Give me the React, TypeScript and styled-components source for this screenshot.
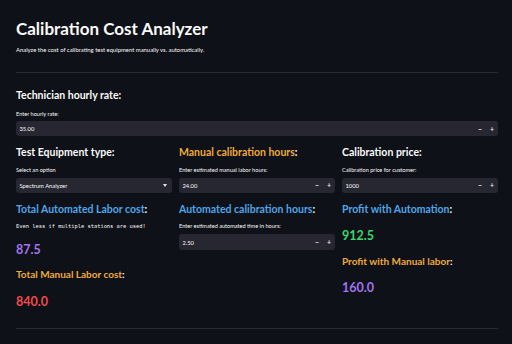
import React from 'react';
import styled, { createGlobalStyle } from 'styled-components';

const GlobalStyle = createGlobalStyle`
  html, body {
    margin: 0;
    padding: 0;
    background: #0e1117;
  }
  body {
    width: 512px;
    height: 344px;
    overflow: hidden;
    font-family: Lato, "Noto Sans", sans-serif;
    color: #fafafa;
  }
`;

const colors = {
  text: '#fafafa',
  blue: '#4ea5e9',
  orange: '#eeaa3c',
  purple: '#a274f2',
  green: '#3dd56d',
  red: '#f24a4a',
};

type Tone = keyof typeof colors;

const Main = styled.main`
  padding: 18px 14px 0 16px;
  display: flex;
  flex-direction: column;
`;

const Title = styled.h1`
  margin: 0;
  font-size: 17px;
  line-height: 22px;
  font-weight: 700;
`;

const Caption = styled.p`
  margin: 6px 0 0;
  font-size: 5.9px;
  line-height: 8px;
`;

const Divider = styled.hr<{ $top: number }>`
  margin: ${p => p.$top}px 0 0;
  border: none;
  border-top: 1px solid #2a2c33;
  height: 0;
`;

const Header = styled.h3<{ $tone?: Tone; $top?: number; $small?: boolean }>`
  margin: ${p => p.$top ?? 0}px 0 0;
  font-size: ${p => (p.$small ? 10 : 10.5)}px;
  line-height: 14px;
  font-weight: 700;
  color: ${p => colors[p.$tone ?? 'text']};
  white-space: nowrap;

  span {
    color: ${colors.text};
  }
`;

const Value = styled.div<{ $tone: Tone; $top: number }>`
  margin-top: ${p => p.$top}px;
  font-size: 12.5px;
  line-height: 16px;
  font-weight: 700;
  color: ${p => colors[p.$tone]};
`;

const Mono = styled.div`
  margin-top: 6px;
  font-family: "DejaVu Sans Mono", "Liberation Mono", monospace;
  font-size: 5.4px;
  line-height: 8px;
  white-space: pre;
`;

const FieldLabel = styled.label<{ $top?: number }>`
  display: block;
  margin-top: ${p => p.$top ?? 7}px;
  font-size: 5.6px;
  line-height: 7px;
  white-space: nowrap;
`;

const Field = styled.div<{ $top?: number }>`
  margin-top: ${p => p.$top ?? 4.3}px;
  height: 15.5px;
  background: #262730;
  border-radius: 3px;
  display: flex;
  align-items: center;
  padding-left: 3.5px;
  font-size: 5.8px;
`;

const FieldValue = styled.span`
  flex: 1;
`;

const StepButton = styled.span`
  width: 12px;
  text-align: center;
  font-size: 7px;
  font-weight: 700;
  color: #e6e6e6;
`;

const Chevron = styled.span`
  width: 0;
  height: 0;
  border-left: 2.5px solid transparent;
  border-right: 2.5px solid transparent;
  border-top: 3px solid #e6e6e6;
  margin-right: 5px;
`;

const Columns = styled.div`
  margin-top: 9px;
  display: grid;
  grid-template-columns: repeat(3, 156px);
  column-gap: 7px;
  align-items: start;
`;

const Column = styled.div`
  display: flex;
  flex-direction: column;
`;

const NumberInput: React.FC<{ value: string; top?: number }> = ({ value, top }) => (
  <Field $top={top}>
    <FieldValue>{value}</FieldValue>
    <StepButton>−</StepButton>
    <StepButton>+</StepButton>
  </Field>
);

const Select: React.FC<{ value: string }> = ({ value }) => (
  <Field>
    <FieldValue>{value}</FieldValue>
    <Chevron />
  </Field>
);

export default function App() {
  return (
    <>
      <GlobalStyle />
      <Main>
        <Title>Calibration Cost Analyzer</Title>
        <Caption>Analyze the cost of calibrating test equipment manually vs. automatically.</Caption>
        <Divider $top={18} />

        <Header $top={15}>Technician hourly rate:</Header>
        <FieldLabel $top={7.5}>Enter hourly rate:</FieldLabel>
        <NumberInput value="35.00" />

        <Columns>
          <Column>
            <Header>Test Equipment type:</Header>
            <FieldLabel>Select an option</FieldLabel>
            <Select value="Spectrum Analyzer" />
            <Header $tone="blue" $top={9}>Total Automated Labor cost<span>:</span></Header>
            <Mono>Even less if multiple stations are used!</Mono>
            <Value $tone="purple" $top={12}>87.5</Value>
            <Header $tone="orange" $top={9} $small>Total Manual Labor cost<span>:</span></Header>
            <Value $tone="red" $top={13.4}>840.0</Value>
          </Column>

          <Column>
            <Header $tone="orange">Manual calibration hours<span>:</span></Header>
            <FieldLabel>Enter estimated manual labor hours:</FieldLabel>
            <NumberInput value="24.00" />
            <Header $tone="blue" $top={9}>Automated calibration hours<span>:</span></Header>
            <FieldLabel $top={6}>Enter estimated automated time in hours:</FieldLabel>
            <NumberInput value="2.50" top={5.3} />
          </Column>

          <Column>
            <Header>Calibration price:</Header>
            <FieldLabel>Calibration price for customer:</FieldLabel>
            <NumberInput value="1000" />
            <Header $tone="blue" $top={9}>Profit with Automation<span>:</span></Header>
            <Value $tone="green" $top={12.2}>912.5</Value>
            <Header $tone="orange" $top={9.4} $small>Profit with Manual labor<span>:</span></Header>
            <Value $tone="purple" $top={12.1}>160.0</Value>
          </Column>
        </Columns>

        <Divider $top={18} />
      </Main>
    </>
  );
}
